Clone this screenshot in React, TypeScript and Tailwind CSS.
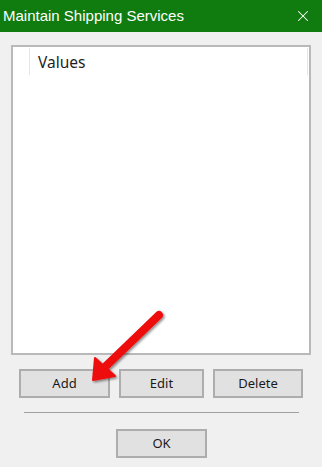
import { X } from 'lucide-react';

function DialogButton({ label, width }: { label: string; width: string }) {
  return (
    <button
      type="button"
      className={`h-[29px] ${width} border-2 border-[#adadad] bg-[#e1e1e1] text-[13px] text-[#1a1a1a]`}
    >
      {label}
    </button>
  );
}

function RedArrow() {
  return (
    <svg className="pointer-events-none absolute left-[80px] top-[305px]" width="92" height="85" viewBox="0 0 92 85">
      <defs>
        <filter id="arrowShadow" x="-20%" y="-20%" width="140%" height="140%">
          <feDropShadow dx="1.5" dy="1.5" stdDeviation="1.2" floodColor="#000" floodOpacity="0.45" />
        </filter>
      </defs>
      <g filter="url(#arrowShadow)">
        <line x1="79" y1="10" x2="26" y2="61" stroke="#ee1111" strokeWidth="8" strokeLinecap="round" />
        <polygon points="13,75 15,53 35,71" fill="#ee1111" stroke="#ee1111" strokeWidth="2" strokeLinejoin="round" />
      </g>
    </svg>
  );
}

export default function App() {
  return (
    <div
      className="relative h-[467px] w-[322px] overflow-hidden bg-[#f0f0f0]"
      style={{ fontFamily: '"Noto Sans", "Open Sans", sans-serif' }}
    >
      <div className="flex h-[32px] items-center justify-between bg-[#107c10] pl-[3px] pr-[10px] text-white">
        <span className="text-[15px]" style={{ fontFamily: '"Liberation Sans", Arial, sans-serif' }}>
          Maintain Shipping Services
        </span>
        <X size={18} strokeWidth={1.4} />
      </div>

      <div className="ml-[11px] mt-[13px] h-[310px] w-[300px] border-2 border-[#b9b9b9] bg-white">
        <div className="flex h-[28px] items-stretch pt-[1px]">
          <div className="w-[16px]" />
          <div className="w-[1px] bg-[#e5e5e5]" />
          <div className="flex-1 pl-[8px] pt-[3px] text-[15.5px] text-[#1e1e1e]">Values</div>
          <div className="mr-[1px] w-[1px] bg-[#e5e5e5]" />
        </div>
      </div>

      <div className="ml-[19px] mt-[14px] flex gap-[9px]">
        <DialogButton label="Add" width="w-[91px]" />
        <DialogButton label="Edit" width="w-[85px]" />
        <DialogButton label="Delete" width="w-[90px]" />
      </div>

      <div className="ml-[24px] mt-[14px] h-[2px] w-[275px] border-t border-[#a0a0a0] border-b-white" />

      <div className="ml-[116px] mt-[15px]">
        <DialogButton label="OK" width="w-[91px]" />
      </div>

      <RedArrow />
    </div>
  );
}
